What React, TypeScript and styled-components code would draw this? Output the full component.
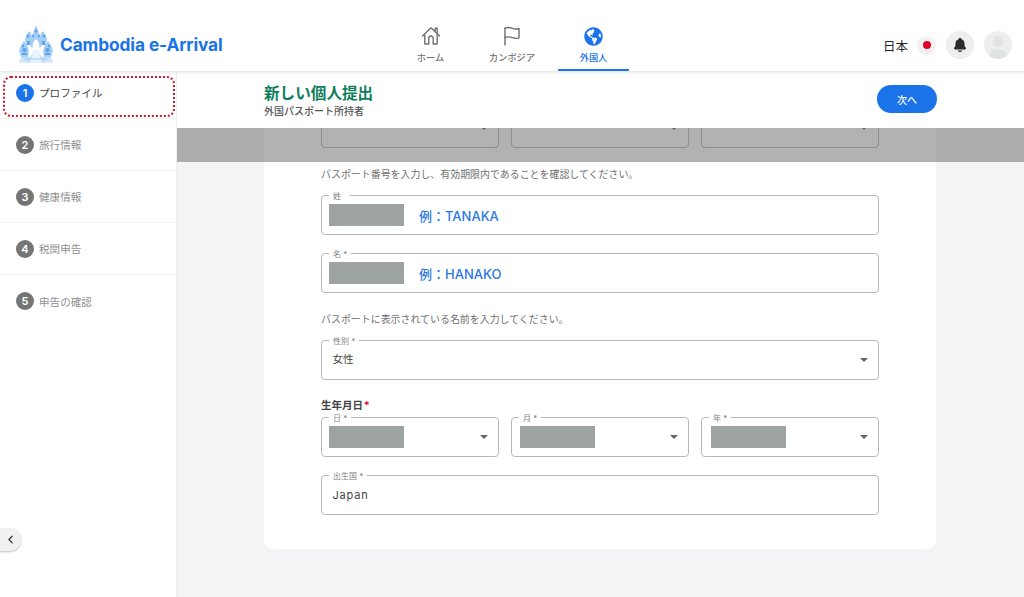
import React from "react";
import styled, { createGlobalStyle } from "styled-components";
import { ChevronLeft } from "lucide-react";
import { FaGlobeAmericas } from "react-icons/fa";
import { IoNotifications } from "react-icons/io5";

const GlobalStyle = createGlobalStyle`
  html, body {
    margin: 0;
    padding: 0;
    background: #fff;
    font-family: Inter, "Noto Sans CJK JP", sans-serif;
  }
  * {
    box-sizing: border-box;
  }
`;

const Page = styled.div`
  width: 1024px;
  height: 597px;
  display: flex;
  flex-direction: column;
  overflow: hidden;
`;

const Header = styled.header`
  height: 71px;
  flex: none;
  display: grid;
  grid-template-columns: 1fr auto 1fr;
  align-items: end;
  background: #fff;
  box-shadow: 0 1px 4px rgba(0, 0, 0, 0.14);
  position: relative;
  z-index: 3;
`;

const Brand = styled.div`
  display: flex;
  align-items: center;
  gap: 7px;
  padding: 0 0 8px 19px;
  color: #1a73e8;
  font-size: 17.3px;
  font-weight: 700;
  letter-spacing: -0.1px;
  white-space: nowrap;
`;

const Nav = styled.nav`
  display: flex;
  gap: 10.5px;
`;

const Tab = styled.div<{ $active?: boolean }>`
  width: 71px;
  height: 45px;
  display: flex;
  flex-direction: column;
  align-items: center;
  color: ${(props) => (props.$active ? "#1a73e8" : "#707070")};
  border-bottom: 2px solid ${(props) => (props.$active ? "#1a73e8" : "transparent")};
  border-radius: 1px;
`;

const TabIcon = styled.div`
  height: 20px;
  display: flex;
  align-items: center;
  justify-content: center;
  font-size: 19px;
`;

const TabLabel = styled.div`
  margin-top: 5px;
  font-size: 9.2px;
  line-height: 13px;
  font-weight: 500;
  white-space: nowrap;
`;

const HeaderRight = styled.div`
  display: flex;
  align-items: center;
  justify-content: flex-end;
  gap: 10px;
  padding: 0 12px 12px 0;
`;

const Lang = styled.div`
  display: flex;
  align-items: center;
  gap: 9px;
  font-size: 12.5px;
  color: #222;
`;

const FlagBadge = styled.div`
  width: 19px;
  height: 19px;
  border-radius: 50%;
  background: #f1f1f2;
  display: flex;
  align-items: center;
  justify-content: center;
  &:after {
    content: "";
    width: 8px;
    height: 8px;
    border-radius: 50%;
    background: #e0002b;
  }
`;

const RoundButton = styled.div`
  width: 28px;
  height: 28px;
  border-radius: 50%;
  background: #eeeeef;
  display: flex;
  align-items: center;
  justify-content: center;
  color: #2b2b2b;
  font-size: 16px;
  overflow: hidden;
`;

const Body = styled.div`
  flex: 1;
  min-height: 0;
  display: flex;
`;

const Sidebar = styled.aside`
  width: 177px;
  flex: none;
  position: relative;
  background: #fff;
  border-right: 1px solid #eeeeef;
`;

const StepList = styled.div`
  display: flex;
  flex-direction: column;
`;

const Step = styled.div<{ $active?: boolean; $first?: boolean }>`
  height: ${(props) => (props.$first ? "48px" : "52px")};
  padding: 0 0 ${(props) => (props.$first ? "4px" : "0")} 16px;
  display: flex;
  align-items: center;
  gap: 5px;
  position: relative;
  border-bottom: 1px solid #eeeeef;
  font-size: 10.6px;
  color: ${(props) => (props.$active ? "#444" : "#909090")};

  &:last-child {
    border-bottom: 0;
  }

  ${(props) =>
    props.$active &&
    `
    &:after {
      content: "";
      position: absolute;
      left: 3px;
      right: 1px;
      top: 5px;
      height: 37px;
      border: 2px dotted #c9192e;
      border-radius: 8px;
    }
  `}
`;

const StepNumber = styled.div<{ $active?: boolean }>`
  width: 18px;
  height: 18px;
  border-radius: 50%;
  background: ${(props) => (props.$active ? "#1a73e8" : "#757575")};
  color: #fff;
  font-size: 11px;
  font-weight: 600;
  display: flex;
  align-items: center;
  justify-content: center;
`;

const CollapseButton = styled.div`
  position: absolute;
  left: 0;
  bottom: 46px;
  width: 21px;
  height: 23px;
  border-radius: 0 11px 11px 0;
  background: #f1f1f2;
  box-shadow: 0 1px 2px rgba(0, 0, 0, 0.25);
  display: flex;
  align-items: center;
  justify-content: center;
  color: #333;
`;

const Main = styled.main`
  flex: 1;
  min-width: 0;
  display: flex;
  flex-direction: column;
  background: #f3f4f6;
`;

const SubHeader = styled.div`
  height: 57px;
  flex: none;
  padding: 2px 87px 0 87px;
  display: flex;
  align-items: center;
  justify-content: space-between;
  background: #fff;
  position: relative;
  z-index: 2;
`;

const Title = styled.div`
  font-size: 15.6px;
  line-height: 20px;
  font-weight: 700;
  color: #0d7d5c;
`;

const Subtitle = styled.div`
  font-size: 10px;
  line-height: 14px;
  font-weight: 500;
  color: #555;
`;

const NextButton = styled.button`
  width: 60px;
  height: 28px;
  margin-bottom: 3px;
  border: 0;
  border-radius: 14px;
  background: #1a73e8;
  color: #fff;
  font-family: inherit;
  font-size: 10px;
  font-weight: 500;
  padding: 0;
`;

const Scroller = styled.div`
  flex: 1;
  min-height: 0;
  padding: 0 88px 0 87px;
  position: relative;
`;

const Band = styled.div`
  position: absolute;
  left: 0;
  right: 0;
  top: 0;
  height: 34px;
  background: rgba(99, 102, 100, 0.5);
`;

const Card = styled.section`
  margin-top: -20px;
  padding: 0 57px 34px;
  background: #fff;
  border-radius: 0 0 9px 9px;
`;

const Help = styled.p`
  margin: 19px 0 13px;
  font-size: 9.95px;
  line-height: 15px;
  color: #707070;
`;

const Row = styled.div<{ $gap?: number }>`
  display: grid;
  grid-template-columns: repeat(3, 1fr);
  gap: 12px;
  margin-top: ${(props) => props.$gap || 0}px;
`;

const Field = styled.div<{ $gap?: number }>`
  height: 40px;
  margin-top: ${(props) => props.$gap || 0}px;
  padding: 0 10px 0 7px;
  display: flex;
  align-items: center;
  justify-content: space-between;
  position: relative;
  border: 1px solid #b7b8b8;
  border-radius: 4px;
  background: #fff;
`;

const FieldLabel = styled.label`
  position: absolute;
  left: 7px;
  top: -4px;
  padding: 0 4px;
  background: #fff;
  font-size: 8px;
  line-height: 9px;
  color: #808080;
  white-space: nowrap;
`;

const Redacted = styled.div<{ $inset?: number }>`
  width: 75px;
  height: 22px;
  flex: none;
  margin-left: ${(props) => props.$inset || 0}px;
  background: #9ca3a0;
`;

const Example = styled.div`
  flex: 1;
  margin-left: 15px;
  font-size: 13px;
  font-weight: 500;
  color: #2a78e4;
`;

const Value = styled.div<{ $spaced?: boolean }>`
  flex: 1;
  padding: 0 0 ${(props) => (props.$spaced ? "0" : "3px")} 3.5px;
  font-size: ${(props) => (props.$spaced ? "11px" : "10.5px")};
  color: #444;
  letter-spacing: ${(props) => (props.$spaced ? "0.8px" : "0")};
`;

const Arrow = styled.span`
  width: 0;
  height: 0;
  border-left: 4px solid transparent;
  border-right: 4px solid transparent;
  border-top: 4px solid #666;
`;

const GroupLabel = styled.div`
  margin-top: 19px;
  font-size: 10.5px;
  line-height: 14px;
  font-weight: 600;
  color: #444;
  & span {
    margin-left: 1px;
    color: #e0002b;
  }
`;

const HomeIcon = () => (
  <svg width="20" height="20" viewBox="0 0 20 20" fill="none" stroke="#707070" strokeWidth="1.4" strokeLinejoin="round">
    <path d="M1.5 10 10 1.8l8.5 8.2" strokeLinecap="round" />
    <path d="M3.8 8.4V18h4V12.2a2.2 2.2 0 0 1 4.4 0V18h4V8.4" />
    <path d="M14.2 5V2.2h2V7" />
  </svg>
);

const FlagIcon = () => (
  <svg width="18" height="20" viewBox="0 0 18 20" fill="none" stroke="#707070" strokeWidth="1.4" strokeLinejoin="round" strokeLinecap="round">
    <path d="M2 19V2.2" />
    <path d="M2 2.2c3-1.2 5.5-.6 7.5.2s3.8 1 6.5.1v9.3c-2.7.9-4.5.7-6.5-.1s-4.5-1.4-7.5-.2" />
  </svg>
);

const AvatarIcon = () => (
  <svg width="28" height="28" viewBox="0 0 28 28" fill="#dfe3e4">
    <ellipse cx="14" cy="10.5" rx="5" ry="6" />
    <path d="M5 26c0-5 3.5-7.5 9-7.5s9 2.5 9 7.5v2H5z" />
  </svg>
);

// rough drawing of the temple emblem
const TempleLogo = () => (
  <svg width="34" height="38" viewBox="0 0 34 38">
    <g fill="#a5cef5">
      <path d="M17 .5 19 5l1 4 3 3 1 6-3 5H13l-3-5 1-6 3-3 1-4z" />
      <path d="M10 6l2 2 1 6-3 6H7l-1-6 2-5z" />
      <path d="M24 6l-2 2-1 6 3 6h3l1-6-2-5z" />
      <path d="M5 16l3 4 2 6-1 6H2L0 26l2-6z" />
      <path d="M29 16l-3 4-2 6 1 6h7l2-6-2-6z" />
    </g>
    <g fill="#5fa6ea">
      <circle cx="5.5" cy="25" r="2.2" />
      <circle cx="28.5" cy="25" r="2.2" />
      <circle cx="4" cy="21" r="1.2" />
      <circle cx="30" cy="21" r="1.2" />
      <circle cx="9" cy="11" r="1.6" />
      <circle cx="25" cy="11" r="1.6" />
      <circle cx="17" cy="6" r="1.5" />
      <circle cx="14" cy="11" r="1.2" />
      <circle cx="20" cy="11" r="1.2" />
      <rect x="8" y="16" width="3" height="4" />
      <rect x="23" y="16" width="3" height="4" />
      <rect x="3" y="28" width="5" height="2" />
      <rect x="26" y="28" width="5" height="2" />
    </g>
    <path d="M17 14c2.5 2 3.5 5 3.5 8v3h-7v-3c0-3 1-6 3.5-8z" fill="#fff" />
    <path d="M2 32h30l2 5.5H0z" fill="#cfe5f9" />
    <path d="M14 25h6l3 12.5H11z" fill="#e6f2fc" />
    <path d="M13 30l-4 7.5M21 30l4 7.5M5 34h24" stroke="#8cc0f2" strokeWidth=".7" fill="none" />
  </svg>
);

const tabs = [
  { label: "ホーム", icon: <HomeIcon /> },
  { label: "カンボジア", icon: <FlagIcon /> },
  { label: "外国人", icon: <FaGlobeAmericas />, active: true },
];

const steps = ["プロファイル", "旅行情報", "健康情報", "税関申告", "申告の確認"];

const App: React.FC = () => {
  return (
    <Page>
      <GlobalStyle />
      <Header>
        <Brand>
          <TempleLogo />
          Cambodia e-Arrival
        </Brand>
        <Nav>
          {tabs.map((tab) => (
            <Tab key={tab.label} $active={tab.active}>
              <TabIcon>{tab.icon}</TabIcon>
              <TabLabel>{tab.label}</TabLabel>
            </Tab>
          ))}
        </Nav>
        <HeaderRight>
          <Lang>
            日本
            <FlagBadge />
          </Lang>
          <RoundButton>
            <IoNotifications />
          </RoundButton>
          <RoundButton>
            <AvatarIcon />
          </RoundButton>
        </HeaderRight>
      </Header>
      <Body>
        <Sidebar>
          <StepList>
            {steps.map((step, i) => (
              <Step key={step} $active={i === 0} $first={i === 0}>
                <StepNumber $active={i === 0}>{i + 1}</StepNumber>
                {step}
              </Step>
            ))}
          </StepList>
          <CollapseButton>
            <ChevronLeft size={13} strokeWidth={2.2} />
          </CollapseButton>
        </Sidebar>
        <Main>
          <SubHeader>
            <div>
              <Title>新しい個人提出</Title>
              <Subtitle>外国パスポート所持者</Subtitle>
            </div>
            <NextButton>次へ</NextButton>
          </SubHeader>
          <Scroller>
            <Card>
              <Row>
                <Field><span /><Arrow /></Field>
                <Field><span /><Arrow /></Field>
                <Field><span /><Arrow /></Field>
              </Row>
              <Help>パスポート番号を入力し、有効期限内であることを確認してください。</Help>
              <Field>
                <FieldLabel>姓&nbsp;&nbsp;</FieldLabel>
                <Redacted />
                <Example>例：TANAKA</Example>
              </Field>
              <Field $gap={18}>
                <FieldLabel>名 *</FieldLabel>
                <Redacted />
                <Example>例：HANAKO</Example>
              </Field>
              <Help>パスポートに表示されている名前を入力してください。</Help>
              <Field>
                <FieldLabel>性別 *</FieldLabel>
                <Value>女性</Value>
                <Arrow />
              </Field>
              <GroupLabel>
                生年月日<span>*</span>
              </GroupLabel>
              <Row $gap={4}>
                <Field>
                  <FieldLabel>日 *</FieldLabel>
                  <Redacted />
                  <Arrow />
                </Field>
                <Field>
                  <FieldLabel>月 *</FieldLabel>
                  <Redacted $inset={1} />
                  <Arrow />
                </Field>
                <Field>
                  <FieldLabel>年 *</FieldLabel>
                  <Redacted $inset={2} />
                  <Arrow />
                </Field>
              </Row>
              <Field $gap={18}>
                <FieldLabel>出生国 *</FieldLabel>
                <Value $spaced>Japan</Value>
              </Field>
            </Card>
            <Band />
          </Scroller>
        </Main>
      </Body>
    </Page>
  );
};

export default App;
